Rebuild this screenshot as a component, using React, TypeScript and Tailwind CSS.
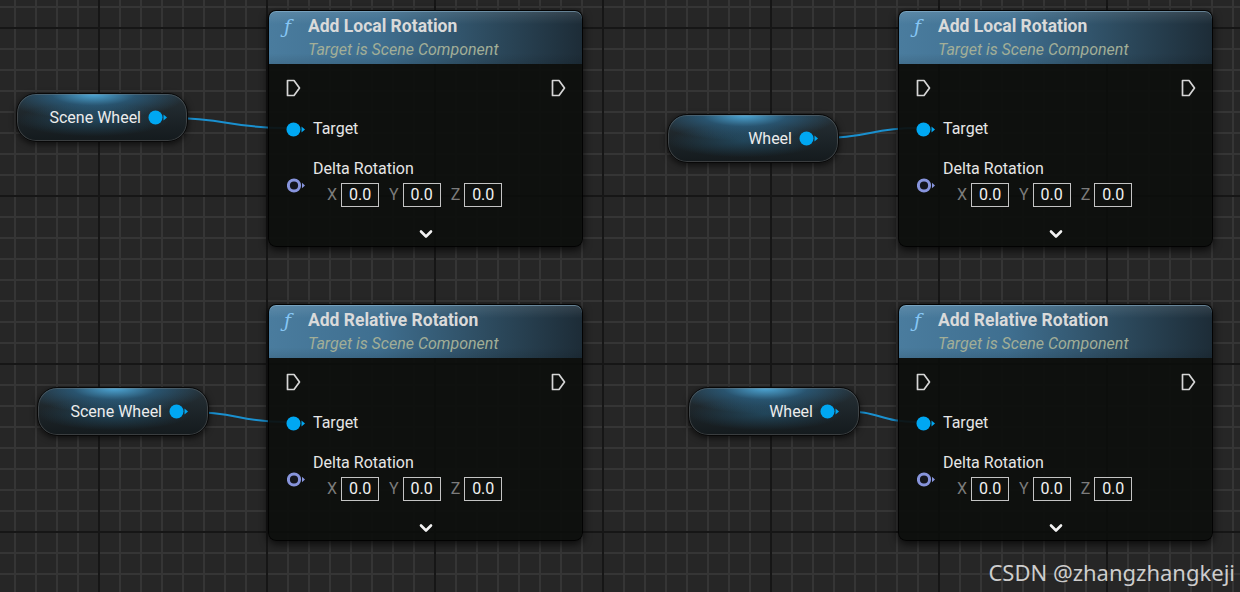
import React from "react";

function ExecPin() {
  return (
    <svg width="16" height="18" viewBox="0 0 16 18" fill="none">
      <path d="M1.5 1.5 H8 L13.5 9 L8 16.5 H1.5 Z" stroke="#d6d6d6" strokeWidth="1.7" strokeLinejoin="round" />
    </svg>
  );
}

function ObjectPin() {
  return (
    <svg width="20" height="15" viewBox="0 0 20 15">
      <circle cx="7.5" cy="7.5" r="7" fill="#00a7f2" />
      <path d="M15.5 4.5 L19 7.5 L15.5 10.5 Z" fill="#00a7f2" />
    </svg>
  );
}

function RotatorPin() {
  return (
    <svg width="20" height="15" viewBox="0 0 20 15">
      <circle cx="7" cy="7.5" r="5.6" fill="#14161e" stroke="#8794dc" strokeWidth="3" />
      <path d="M15 4.8 L18 7.5 L15 10.2 Z" fill="#8794dc" />
    </svg>
  );
}

function Chevron() {
  return (
    <svg width="14" height="10" viewBox="0 0 14 10" fill="none">
      <path d="M2 2.5 L7 7.5 L12 2.5" stroke="#f2f2f2" strokeWidth="2.6" strokeLinecap="round" strokeLinejoin="round" />
    </svg>
  );
}

function AxisInput({ axis }: { axis: string }) {
  return (
    <div className="flex items-center gap-[4px]">
      <span className="text-[16px] leading-none text-[#7b7b7b]">{axis}</span>
      <div className="flex h-[24px] w-[38px] items-center justify-center border border-[#c4c4c4] bg-[#0f110f] text-[16px] leading-none text-[#f2f2f2]">
        0.0
      </div>
    </div>
  );
}

function FuncNode({ title, className }: { title: string; className: string }) {
  return (
    <div
      className={`absolute flex h-[237px] w-[315px] flex-col rounded-[8px] border border-black/80 bg-[rgba(12,14,12,0.92)] shadow-[0_3px_8px_rgba(0,0,0,0.75)] ${className}`}
    >
      <div className="h-[53px] rounded-t-[7px] bg-[image:linear-gradient(to_bottom,rgba(255,255,255,0.1),transparent_25%,transparent_80%,rgba(0,0,0,0.1)),linear-gradient(to_right,#4a7c9e_0%,#3f6f90_35%,#2d4b5f_70%,#1d2c37_100%)] pl-[15px] pt-[5px] shadow-[inset_0_1px_0_rgba(150,190,215,0.5)]">
        <div className="flex items-center">
          <span className="w-[24px] text-[19px] leading-[20px] italic text-[#86c6f4] [font-family:'DejaVu_Serif',serif]">
            ƒ
          </span>
          <span className="text-[17.5px] font-bold leading-[20px] text-[#dadada]">{title}</span>
        </div>
        <div className="mt-[4px] pl-[24px] text-[16px] italic leading-[20px] text-[#a2ae97]">
          Target is Scene Component
        </div>
      </div>

      <div className="mt-[15px] flex h-[18px] items-center justify-between pl-[17px] pr-[15px]">
        <ExecPin />
        <ExecPin />
      </div>

      <div className="mt-[24px] flex h-[16px] items-center gap-[7px] pl-[17px]">
        <ObjectPin />
        <span className="text-[16px] leading-none text-[#e6e6e6]">Target</span>
      </div>

      <div className="mt-[24px] flex items-start pl-[18px]">
        <div className="mt-[17px] w-[26px]">
          <RotatorPin />
        </div>
        <div className="flex flex-col">
          <span className="text-[16px] leading-[16px] text-[#e6e6e6]">Delta Rotation</span>
          <div className="mt-[6px] flex items-center gap-[10px] pl-[14px]">
            <AxisInput axis="X" />
            <AxisInput axis="Y" />
            <AxisInput axis="Z" />
          </div>
        </div>
      </div>

      <div className="mt-[22px] flex justify-center">
        <Chevron />
      </div>
    </div>
  );
}

function VarNode({ label, className }: { label: string; className: string }) {
  return (
    <div
      className={`absolute flex h-[49px] w-[172px] items-center justify-end gap-[7px] rounded-[20px] border border-[#080808] bg-[image:radial-gradient(ellipse_55%_55%_at_45%_0%,rgba(80,175,225,0.95)_0%,rgba(45,115,160,0.55)_45%,transparent_100%),radial-gradient(ellipse_45%_35%_at_45%_55%,rgba(40,110,150,0.45)_0%,transparent_100%),linear-gradient(to_bottom,#263036,#141a1d)] pr-[19px] shadow-[inset_0_0_0_1px_rgba(130,130,130,0.35),0_2px_6px_rgba(0,0,0,0.65)] ${className}`}
    >
      <span className="text-[16px] leading-none text-[#ececec]">{label}</span>
      <ObjectPin />
    </div>
  );
}

export default function App() {
  return (
    <div className="relative h-[592px] w-[1240px] overflow-hidden bg-[#262626] bg-[image:linear-gradient(to_right,#161616_0_2px,transparent_2px),linear-gradient(to_bottom,#161616_0_2px,transparent_2px),linear-gradient(to_right,#353535_0_2px,transparent_2px),linear-gradient(to_bottom,#353535_0_2px,transparent_2px)] bg-size-[168px_168px,168px_168px,21px_21px,21px_21px] bg-position-[98px_0,0_27px,14px_0,0_6px] [font-family:Roboto,'Liberation_Sans',sans-serif]">
      <svg className="absolute inset-0" width="1240" height="592" fill="none">
        <path d="M170 118 C 228 118 228 128 287 128" stroke="#1a90cf" strokeWidth="2" />
        <path d="M822 138 C 870 138 870 128 917 128" stroke="#1a90cf" strokeWidth="2" />
        <path d="M190 412 C 238 412 238 422 287 422" stroke="#1a90cf" strokeWidth="2" />
        <path d="M842 411 C 880 411 880 422 917 422" stroke="#1a90cf" strokeWidth="2" />
      </svg>

      <VarNode label="Scene Wheel" className="left-[16px] top-[93px]" />
      <VarNode label="Wheel" className="left-[667px] top-[114px]" />
      <VarNode label="Scene Wheel" className="left-[37px] top-[387px]" />
      <VarNode label="Wheel" className="left-[688px] top-[387px]" />

      <FuncNode title="Add Local Rotation" className="left-[268px] top-[10px]" />
      <FuncNode title="Add Local Rotation" className="left-[898px] top-[10px]" />
      <FuncNode title="Add Relative Rotation" className="left-[268px] top-[304px]" />
      <FuncNode title="Add Relative Rotation" className="left-[898px] top-[304px]" />

      <div className="absolute bottom-[9px] right-[5px] text-[22px] leading-none text-[#cdcdcd] [font-family:'Noto_Sans',sans-serif]">
        CSDN @zhangzhangkeji
      </div>
    </div>
  );
}
